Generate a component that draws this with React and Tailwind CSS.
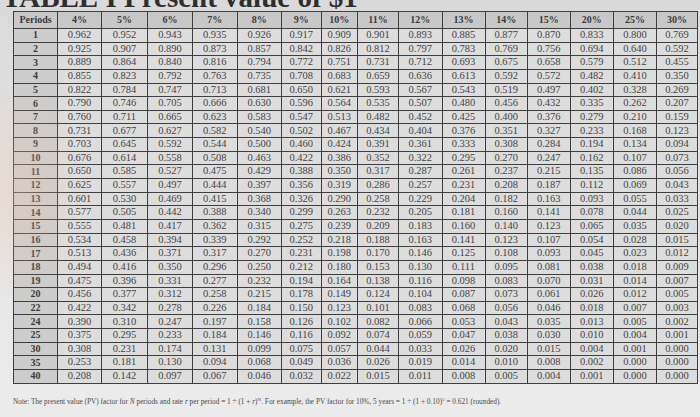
const RATES = ['4%', '5%', '6%', '7%', '8%', '9%', '10%', '11%', '12%', '13%', '14%', '15%', '20%', '25%', '30%'];

// column widths in px, Periods first (photo perspective makes 9%/10% narrower)
const WIDTHS = [44, 44, 46, 45, 44.5, 44.5, 39.5, 36.5, 41, 43.5, 43, 42.5, 42.5, 43.5, 43, 41];

const ROWS = [
  ['1', '0.962 0.952 0.943 0.935 0.926 0.917 0.909 0.901 0.893 0.885 0.877 0.870 0.833 0.800 0.769'],
  ['2', '0.925 0.907 0.890 0.873 0.857 0.842 0.826 0.812 0.797 0.783 0.769 0.756 0.694 0.640 0.592'],
  ['3', '0.889 0.864 0.840 0.816 0.794 0.772 0.751 0.731 0.712 0.693 0.675 0.658 0.579 0.512 0.455'],
  ['4', '0.855 0.823 0.792 0.763 0.735 0.708 0.683 0.659 0.636 0.613 0.592 0.572 0.482 0.410 0.350'],
  ['5', '0.822 0.784 0.747 0.713 0.681 0.650 0.621 0.593 0.567 0.543 0.519 0.497 0.402 0.328 0.269'],
  ['6', '0.790 0.746 0.705 0.666 0.630 0.596 0.564 0.535 0.507 0.480 0.456 0.432 0.335 0.262 0.207'],
  ['7', '0.760 0.711 0.665 0.623 0.583 0.547 0.513 0.482 0.452 0.425 0.400 0.376 0.279 0.210 0.159'],
  ['8', '0.731 0.677 0.627 0.582 0.540 0.502 0.467 0.434 0.404 0.376 0.351 0.327 0.233 0.168 0.123'],
  ['9', '0.703 0.645 0.592 0.544 0.500 0.460 0.424 0.391 0.361 0.333 0.308 0.284 0.194 0.134 0.094'],
  ['10', '0.676 0.614 0.558 0.508 0.463 0.422 0.386 0.352 0.322 0.295 0.270 0.247 0.162 0.107 0.073'],
  ['11', '0.650 0.585 0.527 0.475 0.429 0.388 0.350 0.317 0.287 0.261 0.237 0.215 0.135 0.086 0.056'],
  ['12', '0.625 0.557 0.497 0.444 0.397 0.356 0.319 0.286 0.257 0.231 0.208 0.187 0.112 0.069 0.043'],
  ['13', '0.601 0.530 0.469 0.415 0.368 0.326 0.290 0.258 0.229 0.204 0.182 0.163 0.093 0.055 0.033'],
  ['14', '0.577 0.505 0.442 0.388 0.340 0.299 0.263 0.232 0.205 0.181 0.160 0.141 0.078 0.044 0.025'],
  ['15', '0.555 0.481 0.417 0.362 0.315 0.275 0.239 0.209 0.183 0.160 0.140 0.123 0.065 0.035 0.020'],
  ['16', '0.534 0.458 0.394 0.339 0.292 0.252 0.218 0.188 0.163 0.141 0.123 0.107 0.054 0.028 0.015'],
  ['17', '0.513 0.436 0.371 0.317 0.270 0.231 0.198 0.170 0.146 0.125 0.108 0.093 0.045 0.023 0.012'],
  ['18', '0.494 0.416 0.350 0.296 0.250 0.212 0.180 0.153 0.130 0.111 0.095 0.081 0.038 0.018 0.009'],
  ['19', '0.475 0.396 0.331 0.277 0.232 0.194 0.164 0.138 0.116 0.098 0.083 0.070 0.031 0.014 0.007'],
  ['20', '0.456 0.377 0.312 0.258 0.215 0.178 0.149 0.124 0.104 0.087 0.073 0.061 0.026 0.012 0.005'],
  ['22', '0.422 0.342 0.278 0.226 0.184 0.150 0.123 0.101 0.083 0.068 0.056 0.046 0.018 0.007 0.003'],
  ['24', '0.390 0.310 0.247 0.197 0.158 0.126 0.102 0.082 0.066 0.053 0.043 0.035 0.013 0.005 0.002'],
  ['25', '0.375 0.295 0.233 0.184 0.146 0.116 0.092 0.074 0.059 0.047 0.038 0.030 0.010 0.004 0.001'],
  ['30', '0.308 0.231 0.174 0.131 0.099 0.075 0.057 0.044 0.033 0.026 0.020 0.015 0.004 0.001 0.000'],
  ['35', '0.253 0.181 0.130 0.094 0.068 0.049 0.036 0.026 0.019 0.014 0.010 0.008 0.002 0.000 0.000'],
  ['40', '0.208 0.142 0.097 0.067 0.046 0.032 0.022 0.015 0.011 0.008 0.005 0.004 0.001 0.000 0.000'],
];

const serif = { fontFamily: '"Liberation Serif", "DejaVu Serif", serif' };

export default function App() {
  return (
    <div
      className="relative w-[700px] h-[417px] overflow-hidden bg-linear-to-b from-[#dadada] via-[#e4e4e4] to-[#ececec] text-[#3b3b3b]"
      style={serif}
    >
      {/* title, cropped at the top edge of the photo */}
      <div className="-mt-[17px] pl-[2px] h-[28px] text-[29px] font-bold leading-[29px] text-[#2e2e2e] whitespace-nowrap">
        TABLE I Present value of $1
      </div>

      <div className="pl-[13px]">
        <table className="table-fixed border-collapse w-[684px]">
          <colgroup>
            {WIDTHS.map((w, i) => (
              <col key={i} style={{ width: w }} />
            ))}
          </colgroup>
          <thead>
            <tr className="h-[17px] bg-[#c8c8c8]">
              <th className="border border-[#3f3f3f] text-[10px] font-bold p-0 leading-none">Periods</th>
              {RATES.map((r) => (
                <th key={r} className="border border-[#3f3f3f] text-[10px] font-bold p-0 leading-none">
                  {r}
                </th>
              ))}
            </tr>
          </thead>
          <tbody>
            {ROWS.map(([period, values]) => (
              <tr key={period} className="h-[13.65px]">
                <td className="border border-[#3f3f3f] bg-[#cdcdcd] text-center text-[10px] font-bold p-0 leading-none">
                  {period}
                </td>
                {values.split(' ').map((v, i) => (
                  <td
                    key={i}
                    className="border border-[#3f3f3f] bg-[#dddddd] text-center text-[10.5px] p-0 leading-none text-[#444]"
                  >
                    {v}
                  </td>
                ))}
              </tr>
            ))}
          </tbody>
        </table>
      </div>

      {/* footnote */}
      <p className="mt-[14px] pl-[13px] text-[7.3px] leading-none whitespace-nowrap text-[#4a4a4a]">
        Note: The present value (PV) factor for <i>N</i> periods and rate <i>r</i> per period = 1 ÷ (1 + <i>r</i>)
        <sup className="text-[5px]">N</sup>. For example, the PV factor for 10%, 5 years = 1 ÷ (1 + 0.10)
        <sup className="text-[5px]">5</sup> = 0.621 (rounded).
      </p>

      {/* warm glare from the photo on the left side */}
      <div className="pointer-events-none absolute inset-0 bg-[radial-gradient(ellipse_60px_110px_at_20px_190px,rgba(240,200,170,0.35),transparent)]" />
    </div>
  );
}
